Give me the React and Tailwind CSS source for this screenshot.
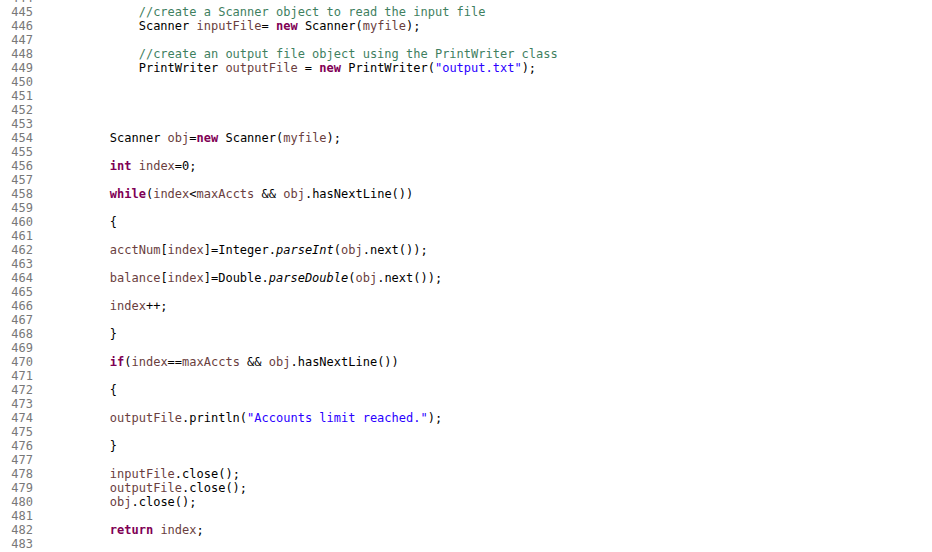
import React from "react";

const K = "text-[#7f0055] font-bold";
const V = "text-[#6a3e3e]";
const C = "text-[#3f7f5f]";
const S = "text-[#2a00ff]";
const I = "italic";

// each line is a list of [text, className]
const lines = [
  [444, []],
  [445, [["            //create a Scanner object to read the input file", C]]],
  [446, [["            Scanner "], ["inputFile", V], ["= "], ["new", K], [" Scanner("], ["myfile", V], [");"]]],
  [447, []],
  [448, [["            //create an output file object using the PrintWriter class", C]]],
  [449, [["            PrintWriter "], ["outputFile", V], [" = "], ["new", K], [" PrintWriter("], ["\"output.txt\"", S], [");"]]],
  [450, []],
  [451, []],
  [452, []],
  [453, []],
  [454, [["        Scanner "], ["obj", V], ["="], ["new", K], [" Scanner("], ["myfile", V], [");"]]],
  [455, []],
  [456, [["        "], ["int", K], [" "], ["index", V], ["=0;"]]],
  [457, []],
  [458, [["        "], ["while", K], ["("], ["index", V], ["<"], ["maxAccts", V], [" && "], ["obj", V], [".hasNextLine())"]]],
  [459, []],
  [460, [["        {"]]],
  [461, []],
  [462, [["        "], ["acctNum", V], ["["], ["index", V], ["]=Integer."], ["parseInt", I], ["("], ["obj", V], [".next());"]]],
  [463, []],
  [464, [["        "], ["balance", V], ["["], ["index", V], ["]=Double."], ["parseDouble", I], ["("], ["obj", V], [".next());"]]],
  [465, []],
  [466, [["        "], ["index", V], ["++;"]]],
  [467, []],
  [468, [["        }"]]],
  [469, []],
  [470, [["        "], ["if", K], ["("], ["index", V], ["=="], ["maxAccts", V], [" && "], ["obj", V], [".hasNextLine())"]]],
  [471, []],
  [472, [["        {"]]],
  [473, []],
  [474, [["        "], ["outputFile", V], [".println("], ["\"Accounts limit reached.\"", S], [");"]]],
  [475, []],
  [476, [["        }"]]],
  [477, []],
  [478, [["        "], ["inputFile", V], [".close();"]]],
  [479, [["        "], ["outputFile", V], [".close();"]]],
  [480, [["        "], ["obj", V], [".close();"]]],
  [481, []],
  [482, [["        "], ["return", K], [" "], ["index", V], [";"]]],
  [483, []],
];

export default function App() {
  return (
    <div className="w-[932px] h-[552px] overflow-hidden bg-white font-['DejaVu_Sans_Mono','Liberation_Mono',monospace] text-[12px] leading-[14px] text-black">
      <div className="-mt-[9px]">
        {lines.map(([num, parts]) => (
          <div key={num} className="flex h-[14px]">
            <div className="w-[33px] text-right text-[#787878]">{num}</div>
            <div className="pl-[19px] whitespace-pre">
              {parts.map(([t, cls], i) => (
                <span key={i} className={cls}>
                  {t}
                </span>
              ))}
            </div>
          </div>
        ))}
      </div>
    </div>
  );
}
